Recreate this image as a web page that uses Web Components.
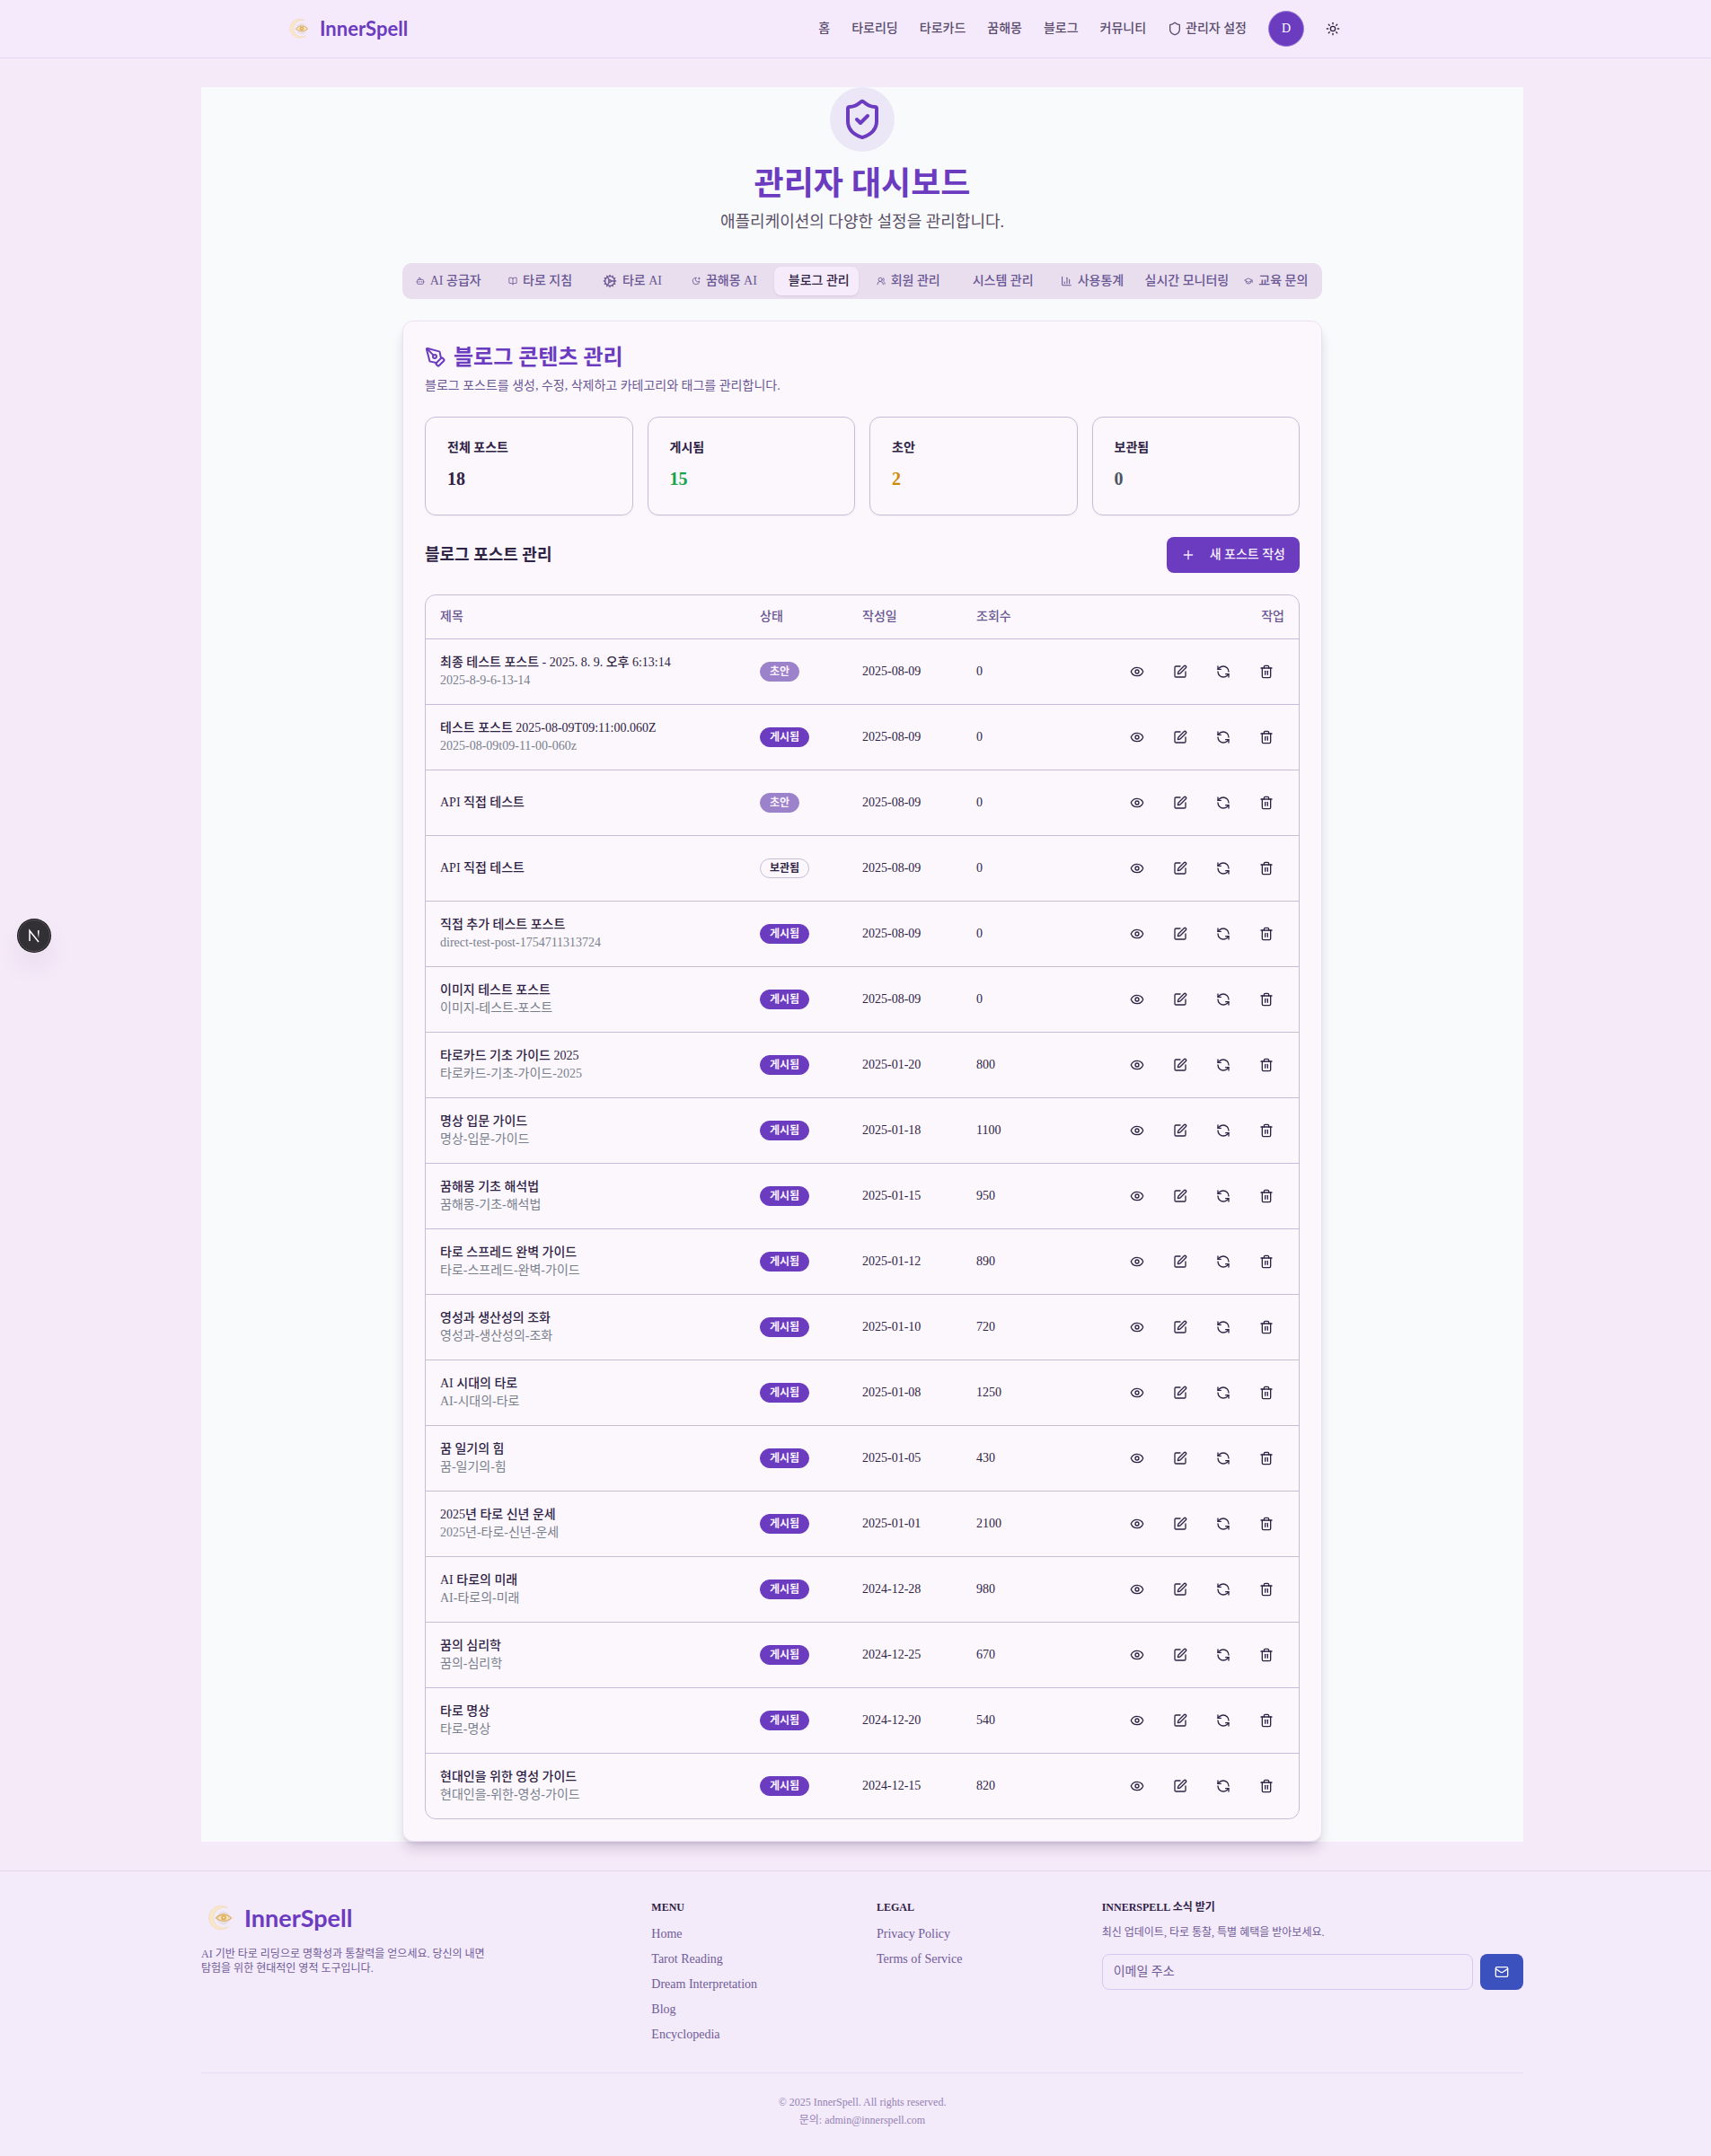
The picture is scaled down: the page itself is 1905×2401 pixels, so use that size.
<!DOCTYPE html>
<html lang="ko">
<head>
<meta charset="utf-8">
<meta name="viewport" content="width=device-width, initial-scale=1">
<title>InnerSpell 관리자 대시보드</title>
<style>
  :root {
    --primary: #6b3bc0;
    --ink: #2f2345;
    --muted: #6a5794;
    --line: #c8bdd8;
    --soft-line: #e5dbf0;
    --card: #fcf7fd;
    --gutter: 15px;
  }
  body {
    margin: 0;
    background: #f5eaf8;
    color: var(--ink);
    font-family: "Liberation Serif", "Noto Sans CJK KR", serif;
    font-size: 14px;
    line-height: 20px;
  }
</style>
</head>
<body>
<site-header></site-header>
<admin-page>
  <admin-tabs></admin-tabs>
  <content-card>
    <stat-grid>
      <stat-card label="전체 포스트">18</stat-card>
      <stat-card label="게시됨" style="--tone:#16a34a">15</stat-card>
      <stat-card label="초안" style="--tone:#ca8a04">2</stat-card>
      <stat-card label="보관됨" style="--tone:#4b5563">0</stat-card>
    </stat-grid>
    <post-toolbar>블로그 포스트 관리</post-toolbar>
    <post-table></post-table>
  </content-card>
</admin-page>
<site-footer></site-footer>
<dev-badge></dev-badge>

<script>
const ICONS = {
  shield: '<path d="M20 13c0 5-3.5 7.5-7.66 8.95a1 1 0 0 1-.67-.01C7.5 20.5 4 18 4 13V6a1 1 0 0 1 1-1c2 0 4.5-1.2 6.24-2.72a1.17 1.17 0 0 1 1.52 0C14.51 3.81 17 5 19 5a1 1 0 0 1 1 1z"/>',
  check: '<path d="M20 13c0 5-3.5 7.5-7.66 8.95a1 1 0 0 1-.67-.01C7.5 20.5 4 18 4 13V6a1 1 0 0 1 1-1c2 0 4.5-1.2 6.24-2.72a1.17 1.17 0 0 1 1.52 0C14.51 3.81 17 5 19 5a1 1 0 0 1 1 1z"/><path d="m9 12 2 2 4-4"/>',
  sun: '<circle cx="12" cy="12" r="4"/><path d="M12 2v2"/><path d="M12 20v2"/><path d="m4.93 4.93 1.41 1.41"/><path d="m17.66 17.66 1.41 1.41"/><path d="M2 12h2"/><path d="M20 12h2"/><path d="m6.34 17.66-1.41 1.41"/><path d="m19.07 4.93-1.41 1.41"/>',
  bot: '<path d="M12 8V4H8"/><rect width="16" height="12" x="4" y="8" rx="2"/><path d="M2 14h2"/><path d="M20 14h2"/><path d="M15 13v2"/><path d="M9 13v2"/>',
  book: '<path d="M12 7v14"/><path d="M3 18a1 1 0 0 1-1-1V4a1 1 0 0 1 1-1h5a4 4 0 0 1 4 4 4 4 0 0 1 4-4h5a1 1 0 0 1 1 1v13a1 1 0 0 1-1 1h-6a3 3 0 0 0-3 3 3 3 0 0 0-3-3z"/>',
  cog: '<path d="M12 20a8 8 0 1 0 0-16 8 8 0 0 0 0 16Z"/><path d="M12 14a2 2 0 1 0 0-4 2 2 0 0 0 0 4Z"/><path d="M12 2v2"/><path d="M12 22v-2"/><path d="m17 20.66-1-1.73"/><path d="M11 10.27 7 3.34"/><path d="m20.66 17-1.73-1"/><path d="m3.34 7 1.73 1"/><path d="M14 12h8"/><path d="M2 12h2"/><path d="m20.66 7-1.73 1"/><path d="m3.34 17 1.73-1"/><path d="m17 3.34-1 1.73"/><path d="m11 13.73-4 6.93"/>',
  moon: '<path d="M12 3a6 6 0 0 0 9 9 9 9 0 1 1-9-9"/><path d="M20 3v4"/><path d="M22 5h-4"/>',
  users: '<path d="M18 21a8 8 0 0 0-16 0"/><circle cx="10" cy="8" r="5"/><path d="M22 20c0-3.37-2-6.5-4-8a5 5 0 0 0-.45-8.3"/>',
  chart: '<path d="M3 3v16a2 2 0 0 0 2 2h16"/><path d="M18 17V9"/><path d="M13 17V5"/><path d="M8 17v-3"/>',
  cap: '<path d="M21.42 10.922a1 1 0 0 0-.019-1.838L12.83 5.18a2 2 0 0 0-1.66 0L2.6 9.08a1 1 0 0 0 0 1.832l8.57 3.908a2 2 0 0 0 1.66 0z"/><path d="M22 10v6"/><path d="M6 12.5V16a6 3 0 0 0 12 0v-3.5"/>',
  pen: '<path d="M15.707 21.293a1 1 0 0 1-1.414 0l-1.586-1.586a1 1 0 0 1 0-1.414l5.586-5.586a1 1 0 0 1 1.414 0l1.586 1.586a1 1 0 0 1 0 1.414z"/><path d="m18 13-1.375-6.874a1 1 0 0 0-.746-.776L3.235 2.028a1 1 0 0 0-1.207 1.207L5.35 15.879a1 1 0 0 0 .776.746L13 18"/><path d="m2.3 2.3 7.286 7.286"/><circle cx="11" cy="11" r="2"/>',
  plus: '<path d="M5 12h14"/><path d="M12 5v14"/>',
  eye: '<path d="M2.062 12.348a1 1 0 0 1 0-.696 10.75 10.75 0 0 1 19.876 0 1 1 0 0 1 0 .696 10.75 10.75 0 0 1-19.876 0"/><circle cx="12" cy="12" r="3"/>',
  edit: '<path d="M12 3H5a2 2 0 0 0-2 2v14a2 2 0 0 0 2 2h14a2 2 0 0 0 2-2v-7"/><path d="M18.375 2.625a1 1 0 0 1 3 3l-9.013 9.014a2 2 0 0 1-.853.505l-2.873.84a.5.5 0 0 1-.62-.62l.84-2.873a2 2 0 0 1 .506-.852z"/>',
  refresh: '<path d="M21 12a9 9 0 0 0-9-9 9.75 9.75 0 0 0-6.74 2.74L3 8"/><path d="M3 3v5h5"/><path d="M3 12a9 9 0 0 0 9 9 9.75 9.75 0 0 0 6.74-2.74L21 16"/><path d="M16 16h5v5"/>',
  trash: '<path d="M3 6h18"/><path d="M19 6v14c0 1-1 2-2 2H7c-1 0-2-1-2-2V6"/><path d="M8 6V4c0-1 1-2 2-2h4c1 0 2 1 2 2v2"/><path d="M10 11v6"/><path d="M14 11v6"/>',
  mail: '<rect width="20" height="16" x="2" y="4" rx="2"/><path d="m22 7-8.97 5.7a1.94 1.94 0 0 1-2.06 0L2 7"/>'
};

function define(name, render) {
  customElements.define(name, class extends HTMLElement {
    constructor() {
      super();
      this.attachShadow({ mode: 'open' });
    }
    connectedCallback() {
      this.shadowRoot.innerHTML =
        '<style>*{box-sizing:border-box}a{color:inherit;text-decoration:none}button,input{font:inherit;color:inherit;margin:0}button{cursor:pointer;border:0;background:none;padding:0}</style>' +
        render(this);
    }
  });
}

/* Line icon; size comes from --size and the box may shrink inside a flex row. */
define('line-icon', el => `
<style>
  :host { display: block; width: var(--size, 16px); height: var(--size, 16px); min-width: 10px; }
  svg { display: block; width: 100%; height: 100%; fill: none; stroke: currentColor; stroke-width: 2; stroke-linecap: round; stroke-linejoin: round; }
</style>
<svg viewBox="0 0 24 24" aria-hidden="true">${ICONS[el.getAttribute('name')] || ''}</svg>`);

define('brand-logo', el => {
  let rays = '';
  for (let i = 0; i < 20; i++) rays += `<path d="M25 12.500v3" transform="rotate(${i * 18} 25 20)"/>`;
  return `
<style>
  :host { display: block; --mark: 32px; --word: 22px; }
  :host([large]) { --mark: 40px; --word: 27px; }
  a { display: flex; align-items: center; gap: 8px; color: var(--primary); font-family: Lato, "Open Sans", sans-serif; font-weight: 700; font-size: var(--word); line-height: var(--mark); }
  svg { display: block; width: var(--mark); height: var(--mark); }
</style>
<a href="#">
  <svg viewBox="0 0 40 40" fill="none" aria-hidden="true">
    <path d="M29 8.500A13.200 13.200 0 1 0 30 30A11 11 0 0 1 22.500 31A11.500 11.500 0 0 1 22.500 8.500A11 11 0 0 1 29 8.500Z" fill="#f8e7cb" stroke="#f2dab2" stroke-width=".8"/>
    <g stroke="#d3c3b4" stroke-width=".6">${rays}</g>
    <path d="M16.500 20Q25 12 33.500 20Q25 27 16.500 20Z" fill="#f2e2c6" stroke="#dcb266" stroke-width="1.200"/>
    <circle cx="25" cy="19.800" r="2.800" fill="#e0ae50"/><circle cx="25" cy="19.500" r="1" fill="#f8ecd2"/>
  </svg>
  <span>InnerSpell</span>
</a>`;
});

define('site-header', () => `
<style>
  :host { display: block; background: #f5eafb; border-bottom: 1px solid #e2d8f0; padding-left: var(--gutter); }
  .inner { max-width: 1472px; height: 64px; margin: 0 auto; padding: 0 192px 0 92px; display: flex; align-items: center; justify-content: space-between; }
  .right { display: flex; align-items: center; gap: 12px; }
  nav { display: flex; align-items: center; gap: 24px; font-weight: 500; color: #594c6e; white-space: nowrap; }
  nav a { display: flex; align-items: center; gap: 4px; }
  .avatar { width: 40px; height: 40px; border-radius: 50%; background: var(--primary); border: 1px solid #9b7ed3; color: #fff; }
  .theme { width: 40px; height: 40px; display: grid; place-items: center; --size: 16px; }
</style>
<header class="inner">
  <brand-logo></brand-logo>
  <div class="right">
    <nav>
      <a href="#">홈</a><a href="#">타로리딩</a><a href="#">타로카드</a><a href="#">꿈해몽</a><a href="#">블로그</a><a href="#">커뮤니티</a>
      <a href="#"><line-icon name="shield"></line-icon>관리자 설정</a>
      <button class="avatar" type="button">D</button>
    </nav>
    <button class="theme" type="button" aria-label="테마 변경"><line-icon name="sun"></line-icon></button>
  </div>
</header>`);

define('admin-page', () => `
<style>
  :host { display: block; padding: 32px 0 32px var(--gutter); }
  main { max-width: 1472px; margin: 0 auto; background: #f9fafc; }
  .hero { display: flex; flex-direction: column; align-items: center; text-align: center; }
  .disc { padding: 12px; border-radius: 50%; background: #ece7f6; color: var(--primary); --size: 48px; }
  h1 { margin: 16px 0 8px; font-size: 36px; line-height: 40px; font-weight: 700; color: var(--primary); }
  p { margin: 0; font-size: 18px; line-height: 28px; color: #5a5068; }
  .body { max-width: 1024px; margin: 32px auto 0; display: flex; flex-direction: column; gap: 24px; }
</style>
<main>
  <div class="hero">
    <div class="disc"><line-icon name="check"></line-icon></div>
    <h1>관리자 대시보드</h1>
    <p>애플리케이션의 다양한 설정을 관리합니다.</p>
  </div>
  <div class="body"><slot></slot></div>
</main>`);

define('admin-tabs', () => {
  const tabs = [['bot', 'AI 공급자'], ['book', '타로 지침'], ['cog', '타로 AI'], ['moon', '꿈해몽 AI'], ['', '블로그 관리'],
    ['users', '회원 관리'], ['', '시스템 관리'], ['chart', '사용통계'], ['', '실시간 모니터링'], ['cap', '교육 문의']];
  return `
<style>
  :host { display: block; }
  .list { display: grid; grid-template-columns: repeat(10, minmax(0, 1fr)); gap: 8px; padding: 4px; border-radius: 10px; background: #e9deee; color: var(--muted); }
  button { display: flex; align-items: center; justify-content: center; gap: 6px; height: 32px; padding: 0 12px; border-radius: 8px; font-weight: 500; white-space: nowrap; }
  button[aria-selected="true"] { background: #f6ebfa; color: var(--ink); box-shadow: 0 1px 2px rgba(60, 30, 90, .1); }
  span { flex: none; }
</style>
<div class="list" role="tablist">
  ${tabs.map(([icon, text]) => `<button type="button" role="tab" aria-selected="${text === '블로그 관리'}">${icon ? `<line-icon name="${icon}"></line-icon>` : '<i></i>'}<span>${text}</span></button>`).join('')}
</div>`;
});

define('content-card', () => `
<style>
  :host { display: block; background: var(--card); border: 1px solid #ebe2f6; border-radius: 12px; padding: 24px; box-shadow: 0 10px 15px -3px rgba(40, 20, 70, .18), 0 4px 6px -4px rgba(40, 20, 70, .18); }
  h2 { display: flex; align-items: center; gap: 8px; margin: 0 0 6px; font-size: 24px; line-height: 32px; font-weight: 600; color: var(--primary); --size: 24px; }
  p { margin: 0 0 24px; color: var(--muted); }
  .stack { display: flex; flex-direction: column; gap: 24px; }
</style>
<h2><line-icon name="pen"></line-icon>블로그 콘텐츠 관리</h2>
<p>블로그 포스트를 생성, 수정, 삭제하고 카테고리와 태그를 관리합니다.</p>
<div class="stack"><slot></slot></div>`);

define('stat-grid', () => `
<style>
  :host { display: grid; grid-template-columns: repeat(4, 1fr); gap: 16px; }
</style>
<slot></slot>`);

define('stat-card', el => `
<style>
  :host { display: block; padding: 24px; border: 1px solid var(--line); border-radius: 12px; box-shadow: 0 1px 2px rgba(60, 30, 90, .06); }
  h3 { margin: 0 0 8px; font-size: 14px; line-height: 20px; font-weight: 600; }
  div { font-size: 20px; line-height: 32px; font-weight: 700; color: var(--tone, var(--ink)); }
</style>
<h3>${el.getAttribute('label')}</h3><div><slot></slot></div>`);

define('post-toolbar', () => `
<style>
  :host { display: flex; align-items: center; justify-content: space-between; }
  h3 { margin: 0; font-size: 18px; line-height: 28px; font-weight: 600; }
  button { display: flex; align-items: center; gap: 16px; height: 40px; padding: 0 16px; border-radius: 8px; background: var(--primary); color: #f8f0fd; font-weight: 500; }
</style>
<h3><slot></slot></h3>
<button type="button"><line-icon name="plus"></line-icon>새 포스트 작성</button>`);

define('status-badge', () => `
<style>
  :host { display: inline-block; vertical-align: middle; padding: 2px 10px; border: 1px solid var(--primary); border-radius: 11px; background: var(--primary); color: #faf3fe; font-size: 12px; line-height: 16px; font-weight: 600; white-space: nowrap; }
  :host([kind="draft"]) { background: #9c82ca; border-color: #9c82ca; }
  :host([kind="archived"]) { background: none; border-color: var(--line); color: var(--ink); }
</style>
<slot></slot>`);

define('post-table', () => {
  const kinds = { live: '게시됨', draft: '초안', archived: '보관됨' };
  const posts = [
    ['최종 테스트 포스트 - 2025. 8. 9. 오후 6:13:14', '2025-8-9-6-13-14', 'draft', '2025-08-09', 0],
    ['테스트 포스트 2025-08-09T09:11:00.060Z', '2025-08-09t09-11-00-060z', 'live', '2025-08-09', 0],
    ['API 직접 테스트', '', 'draft', '2025-08-09', 0],
    ['API 직접 테스트', '', 'archived', '2025-08-09', 0],
    ['직접 추가 테스트 포스트', 'direct-test-post-1754711313724', 'live', '2025-08-09', 0],
    ['이미지 테스트 포스트', '이미지-테스트-포스트', 'live', '2025-08-09', 0],
    ['타로카드 기초 가이드 2025', '타로카드-기초-가이드-2025', 'live', '2025-01-20', 800],
    ['명상 입문 가이드', '명상-입문-가이드', 'live', '2025-01-18', 1100],
    ['꿈해몽 기초 해석법', '꿈해몽-기초-해석법', 'live', '2025-01-15', 950],
    ['타로 스프레드 완벽 가이드', '타로-스프레드-완벽-가이드', 'live', '2025-01-12', 890],
    ['영성과 생산성의 조화', '영성과-생산성의-조화', 'live', '2025-01-10', 720],
    ['AI 시대의 타로', 'AI-시대의-타로', 'live', '2025-01-08', 1250],
    ['꿈 일기의 힘', '꿈-일기의-힘', 'live', '2025-01-05', 430],
    ['2025년 타로 신년 운세', '2025년-타로-신년-운세', 'live', '2025-01-01', 2100],
    ['AI 타로의 미래', 'AI-타로의-미래', 'live', '2024-12-28', 980],
    ['꿈의 심리학', '꿈의-심리학', 'live', '2024-12-25', 670],
    ['타로 명상', '타로-명상', 'live', '2024-12-20', 540],
    ['현대인을 위한 영성 가이드', '현대인을-위한-영성-가이드', 'live', '2024-12-15', 820]
  ];
  const actions = [['eye', '보기'], ['edit', '수정'], ['refresh', '상태 변경'], ['trash', '삭제']];
  return `
<style>
  :host { display: block; border: 1px solid var(--line); border-radius: 12px; overflow: hidden; }
  table { width: 100%; table-layout: fixed; border-collapse: separate; border-spacing: 0; }
  .status { width: 114px; } .date { width: 127px; } .views { width: 120px; } .tools { width: 255px; }
  th { height: 49px; padding: 0 16px; text-align: left; font-weight: 500; color: var(--muted); border-bottom: 1px solid var(--line); }
  th:last-child { text-align: right; }
  td { padding: 16px; border-bottom: 1px solid var(--line); }
  tr:last-child td { border-bottom: 0; }
  .title { font-weight: 500; }
  .slug { color: #78808c; }
  .actions { display: flex; justify-content: flex-end; gap: 8px; }
  .actions button { width: 40px; height: 40px; display: grid; place-items: center; }
</style>
<table>
  <colgroup><col><col class="status"><col class="date"><col class="views"><col class="tools"></colgroup>
  <thead><tr><th>제목</th><th>상태</th><th>작성일</th><th>조회수</th><th>작업</th></tr></thead>
  <tbody>
  ${posts.map(([title, slug, kind, date, views]) => `<tr>
    <td><div class="title">${title}</div>${slug ? `<div class="slug">${slug}</div>` : ''}</td>
    <td><status-badge kind="${kind}">${kinds[kind]}</status-badge></td>
    <td>${date}</td><td>${views}</td>
    <td><div class="actions">${actions.map(([icon, label]) => `<button type="button" aria-label="${label}"><line-icon name="${icon}"></line-icon></button>`).join('')}</div></td>
  </tr>`).join('')}
  </tbody>
</table>`;
});

define('site-footer', () => `
<style>
  :host { display: block; background: #f3eafa; border-top: 1px solid #e2d8ec; padding-left: var(--gutter); font-size: 12px; line-height: 16px; color: #705c98; }
  footer { max-width: 1472px; margin: 0 auto; padding: 32px 0; }
  .cols { display: grid; grid-template-columns: repeat(6, 1fr); column-gap: 32px; padding-bottom: 32px; border-bottom: 1px solid #e9def5; }
  .wide { grid-column: span 2; }
  .about { margin: 12px 0 0; max-width: 320px; word-break: keep-all; }
  h3 { margin: 0 0 12px; font-size: 12px; line-height: 16px; font-weight: 700; color: var(--ink); }
  ul { list-style: none; margin: 0; padding: 0; display: flex; flex-direction: column; gap: 8px; font-size: 14px; line-height: 20px; }
  .news { margin: 0 0 16px; }
  form { display: flex; gap: 8px; font-size: 14px; }
  input { flex: 1; min-width: 0; height: 40px; padding: 0 12px; border: 1px solid #d6c8f1; border-radius: 8px; background: transparent; outline: 0; }
  input::placeholder { color: #705c98; opacity: 1; }
  form button { width: 48px; height: 40px; border-radius: 8px; background: #3b51bd; color: #fff; display: grid; place-items: center; }
  .legal { display: flex; flex-direction: column; align-items: center; gap: 4px; padding-top: 24px; color: #9582b5; }
</style>
<footer>
  <div class="cols">
    <div class="wide">
      <brand-logo large></brand-logo>
      <p class="about">AI 기반 타로 리딩으로 명확성과 통찰력을 얻으세요. 당신의 내면 탐험을 위한 현대적인 영적 도구입니다.</p>
    </div>
    <div><h3>MENU</h3><ul><li><a href="#">Home</a></li><li><a href="#">Tarot Reading</a></li><li><a href="#">Dream Interpretation</a></li><li><a href="#">Blog</a></li><li><a href="#">Encyclopedia</a></li></ul></div>
    <div><h3>LEGAL</h3><ul><li><a href="#">Privacy Policy</a></li><li><a href="#">Terms of Service</a></li></ul></div>
    <div class="wide">
      <h3>INNERSPELL 소식 받기</h3>
      <p class="news">최신 업데이트, 타로 통찰, 특별 혜택을 받아보세요.</p>
      <form><input type="email" placeholder="이메일 주소" aria-label="이메일 주소"><button type="button" aria-label="구독하기"><line-icon name="mail"></line-icon></button></form>
    </div>
  </div>
  <div class="legal"><span>© 2025 InnerSpell. All rights reserved.</span><span>문의: admin@innerspell.com</span></div>
</footer>`);

/* Floating developer-tools button that hovers over the page edge. */
define('dev-badge', () => `
<style>
  :host { position: absolute; left: 20px; top: 1024px; }
  button { display: grid; place-items: center; width: 36px; height: 36px; border-radius: 50%; background: #323034; border: 1px solid #58545c; box-shadow: 0 0 0 1px #171717, 0 16px 32px -8px rgba(60, 40, 100, .24); }
  svg { display: block; width: 16px; height: 16px; }
</style>
<button type="button" aria-label="개발 도구">
  <svg viewBox="0 0 16 16" fill="none" stroke-width="1.500" aria-hidden="true">
    <defs><linearGradient id="fade" x1="0" y1="0" x2="0" y2="1"><stop offset=".3" stop-color="#fff"/><stop offset="1" stop-color="#fff" stop-opacity="0"/></linearGradient></defs>
    <path d="M3 14V2.500L13 15" stroke="#fff"/><rect x="12" y="2" width="1.500" height="9" fill="url(#fade)"/>
  </svg>
</button>`);
</script>
</body>
</html>
